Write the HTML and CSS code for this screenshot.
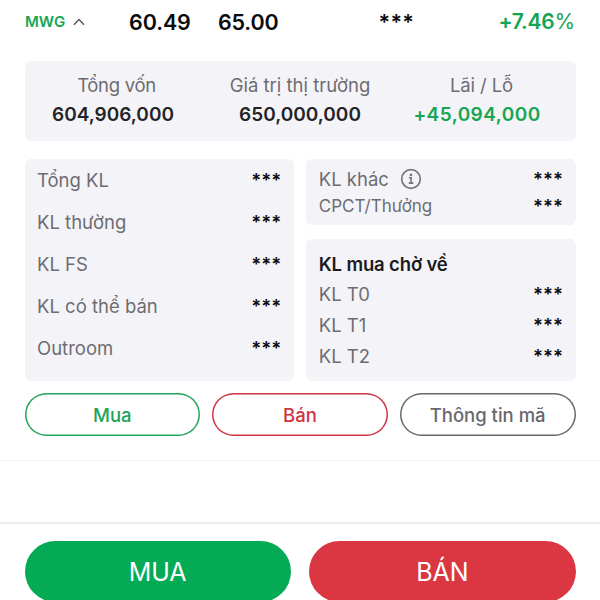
FILE: index.html
```html
<!DOCTYPE html>
<html lang="vi">
<head>
<meta charset="utf-8">
<title>MWG</title>
<link rel="stylesheet" href="styles.css">
</head>
<body>
<main class="screen">
  <header class="quote">
    <span class="symbol">MWG</span>
    <svg class="chevron" width="12" height="8" viewBox="0 0 12 8"><path d="M1 6.8 6 1.6 11 6.8" fill="none" stroke="#555" stroke-width="1.4"/></svg>
    <span class="price cost">60.49</span>
    <span class="price last">65.00</span>
    <span class="price hidden">***</span>
    <span class="price change">+7.46<span class="percent">%</span></span>
  </header>
  <section class="panel summary">
    <div class="metric capital"><span>Tổng vốn</span><b>604,906,000</b></div>
    <div class="metric"><span>Giá trị thị trường</span><b>650,000,000</b></div>
    <div class="metric profit"><span>Lãi / Lỗ</span><b>+45,094,000</b></div>
  </section>
  <section class="details">
    <div class="panel volumes">
      <div class="row"><span>Tổng KL</span><b>***</b></div>
      <div class="row"><span>KL thường</span><b>***</b></div>
      <div class="row"><span>KL FS</span><b>***</b></div>
      <div class="row"><span>KL có thể bán</span><b>***</b></div>
      <div class="row"><span>Outroom</span><b>***</b></div>
    </div>
    <div class="side">
      <div class="panel other">
        <div class="row"><span>KL khác</span>
          <svg class="info" width="22" height="22" viewBox="0 0 22 22"><circle cx="11" cy="11" r="9.3" fill="none" stroke="#77767b" stroke-width="1.7"/><circle cx="11" cy="6.9" r="1.3" fill="#77767b"/><path d="M8.9 9.8h2.2v5M8.7 15.1h4.7" fill="none" stroke="#77767b" stroke-width="1.6"/></svg>
          <b>***</b></div>
        <div class="row small"><span>CPCT/Thưởng</span><b>***</b></div>
      </div>
      <div class="panel pending">
        <h2>KL mua chờ về</h2>
        <div class="row"><span>KL T0</span><b>***</b></div>
        <div class="row"><span>KL T1</span><b>***</b></div>
        <div class="row"><span>KL T2</span><b>***</b></div>
      </div>
    </div>
  </section>
  <nav class="actions">
    <button class="outline buy">Mua</button>
    <button class="outline sell">Bán</button>
    <button class="outline about">Thông tin mã</button>
  </nav>
  <footer class="orders">
    <button class="order order-buy">MUA</button>
    <button class="order order-sell">BÁN</button>
  </footer>
</main>
</body>
</html>
```
FILE: styles.css
```css
* { box-sizing: border-box; }
body {
  margin: 0;
  background: #fff;
  font-family: Inter, "Liberation Sans", sans-serif;
  font-size: 18.5px;
  color: #6d6c72;
}
.screen { height: 600px; overflow: hidden; }
.quote {
  display: flex;
  align-items: center;
  height: 43px;
  padding: 0 25px;
  margin-bottom: 17.5px;
}
.symbol { width: 41px; font-size: 15px; font-weight: 600; color: #16a653; }
.chevron { margin-left: 7px; }
.price { font-size: 21.5px; font-weight: 600; color: #0b0b0c; white-space: nowrap; }
.cost { width: 89px; margin-left: 44px; letter-spacing: -.1px; }
.last { width: 160.5px; letter-spacing: -.2px; }
.hidden { letter-spacing: .3px; }
.change { margin-left: auto; font-size: 21px; font-weight: 600; letter-spacing: -.2px; color: #16a653; }
.percent { font-weight: 400; }
.panel { background: #f4f4f8; border-radius: 6px; }
.summary {
  display: grid;
  grid-template-columns: 177px 1fr 177px;
  height: 80px;
  margin: 0 24.5px 18.5px;
  padding: 10px 0;
  line-height: 29px;
  text-align: center;
}
.metric { display: flex; flex-direction: column; }
.metric b { font-size: 19px; font-weight: 600; color: #242427; }
.capital span { padding-left: 7px; letter-spacing: -.3px; }
.profit { padding-right: 20px; }
.profit span { padding-left: 9px; letter-spacing: -.1px; }
.profit b { letter-spacing: .45px; color: #16a653; }
.details {
  display: grid;
  grid-template-columns: 1fr 1fr;
  gap: 12.5px;
  height: 221.5px;
  margin: 0 24.5px 12.5px;
}
.row { display: flex; align-items: center; }
.row b {
  margin-left: auto;
  font-weight: 600;
  color: #0b0b0c;
}
.volumes { padding: .5px 12.5px 0; }
.volumes .row { height: 41.8px; }
.side { display: flex; flex-direction: column; gap: 14px; }
.other { height: 66px; padding: 7px 12.5px 0; line-height: 27px; }
.small span { font-size: 17px; }
.info { margin: -2px 0 0 11px; }
.pending { flex: 1; padding: 10px 12.5px 0; }
.pending h2 { margin: 0; font-size: 18.5px; font-weight: 600; line-height: 30px; letter-spacing: -.15px; color: #1b1b1e; }
.pending .row { height: 30.8px; }
.actions { display: grid; grid-template-columns: repeat(3, 1fr); gap: 12px; padding: 0 24.5px; height: 67.5px; border-bottom: 1px solid #f5f5f5; }
.outline {
  height: 43px;
  padding: 0;
  border: 0;
  border-radius: 22px;
  box-shadow: inset 0 0 0 1.5px;
  background: none;
  font: 500 18.5px Inter, "Liberation Sans", sans-serif;
}
.buy { color: #20a45a; }
.sell { color: #cd3542; }
.about { color: #68676c; }
.orders {
  display: grid;
  grid-template-columns: 1fr 1fr;
  gap: 18.5px;
  margin-top: 61px;
  padding: 17px 24.5px 0;
  border-top: 2px solid #eee;
}
.order {
  height: 61px;
  padding: 2px 0 0;
  border: 0;
  border-radius: 31px;
  color: #fff;
  font: 400 25px Inter, "Liberation Sans", sans-serif;
}
.order-buy { background: #04aa54; }
.order-sell { background: #da3743; }
```
